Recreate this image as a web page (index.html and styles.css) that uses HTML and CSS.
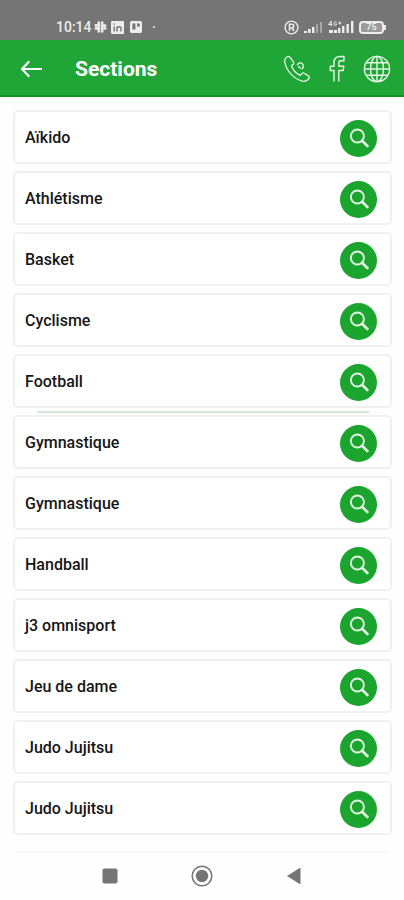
FILE: index.html
```html
<!DOCTYPE html>
<html lang="fr">
<head>
<meta charset="utf-8">
<meta name="viewport" content="width=device-width, initial-scale=1">
<title>Sections</title>
<link rel="stylesheet" href="styles.css">
</head>
<body>
<svg class="defs" aria-hidden="true">
  <symbol id="search" viewBox="0 0 20 20">
    <circle cx="8.4" cy="8" r="6.5" fill="none" stroke="currentColor" stroke-width="1.9"/>
    <path d="M13 12.8 18.4 18" fill="none" stroke="currentColor" stroke-width="2.6" stroke-linecap="round"/>
  </symbol>
</svg>

<div class="status">
  <div class="status-group">
    <span class="time">10:14</span>
    <svg class="slack" width="13" height="12" viewBox="0 0 13 12" fill="none" stroke="currentColor" stroke-width="2.6" stroke-linecap="round"><path d="M4.8 1.6v3.6M8.2 6.8v3.6M1.8 7.4h3.4M7.8 4.6h3.4M8.2 1.6v.6M4.8 9.8v.6M1.8 4.4h.6M10.8 7.4h.4"/></svg>
    <svg class="linkedin" width="13" height="13" viewBox="0 0 13 13"><rect width="13" height="13" rx="1" fill="currentColor"/><path d="M3.2 5.4v5M3.2 2.6v1.2M6 10.4v-5M6 7.6c.4-2.4 4-2.4 4 0v2.8" fill="none" stroke="#757575" stroke-width="1.4"/></svg>
    <svg class="trello" width="12" height="12" viewBox="0 0 12 12"><rect width="12" height="12" rx="1.5" fill="currentColor"/><path d="M2.4 2.6h3v6h-3zM7 2.6h2.8v3H7z" fill="#757575"/></svg>
    <span class="dot"></span>
  </div>
  <div class="status-group icons">
    <svg width="15" height="15" viewBox="0 0 15 15" fill="none" stroke="currentColor"><circle cx="7.5" cy="7.5" r="6.4" stroke-width="1.4"/><path d="M5.5 11V4.2h2.4a1.8 1.8 0 0 1 0 3.7H5.5M8 8l2 3" stroke-width="1.5"/></svg>
    <svg width="19" height="14" viewBox="0 0 19 14" fill="currentColor"><path d="M0 11h3v2H0zM4 9h2.6v4H4zM8 7h2.4v6H8z"/><path d="M12 4h2v9h-2zM16 2h2v11h-2z" opacity=".4"/></svg>
    <svg width="26" height="14" viewBox="0 0 26 14" fill="currentColor"><path d="M1 10h4v3H1zM6 10h3v3H6zM10 8h2.4v5H10zM14 6h2.4v7H14zM18.5 4h2.4v9h-2.4zM23 1h2.4v12H23z"/><path d="M3.3 6V1L.6 4.6h3.6M8.5 1.8C6 .2 5 5.4 7.2 5.4c1.2 0 1.4-.8 1.4-1.6H7.4M10.4 3h3M11.9 1.5v3" fill="none" stroke="currentColor"/></svg>
    <span class="battery">75</span>
  </div>
</div>

<header class="bar">
  <button class="back" type="button" aria-label="Retour">
    <svg width="24" height="20" viewBox="0 0 24 20" fill="none" stroke="currentColor" stroke-width="2.2" stroke-linecap="round" stroke-linejoin="round"><path d="M21 10H2M8.6 3 2 10l6.6 7"/></svg>
  </button>
  <h1>Sections</h1>
  <nav class="links">
    <a href="#" aria-label="Téléphone"><svg width="28" height="28" viewBox="0 0 28 28" fill="none" stroke="currentColor" stroke-width="1.3" stroke-linejoin="round" stroke-linecap="round"><path d="M4.4 1.8c-2.2 1.3-3.2 3.6-2.5 6.3 2 8.2 9.2 15.8 17.3 18 2.8.7 5.3-.3 6.9-2.9.5-.9.2-1.8-.7-2.3l-4.3-2.7c-.8-.5-1.6-.3-2.2.4l-1.5 1.8c-3.9-1.6-7.5-5.3-9-9.6l1.7-1.4c.7-.6.8-1.4.4-2.2L7.3 2.6c-.6-1.1-1.8-1.4-2.9-.8ZM14.4 9.6a3.2 3.2 0 1 1 4.6 4.2M15.4 11.4l2 1.6"/></svg></a>
    <a href="#" aria-label="Facebook"><svg width="28" height="28" viewBox="0 0 28 28" fill="none" stroke="currentColor" stroke-width="1.4" stroke-linejoin="round"><path d="M11 26.6V15.5H7.3v-4.3H11V7.5c0-4 2.2-6 6.2-6H21v4.3h-3c-1.5 0-2.2.8-2.2 2.2v3.2h5l-.6 4.3h-4.4v11.1"/></svg></a>
    <a href="#" aria-label="Site web"><svg width="28" height="28" viewBox="0 0 28 28" fill="none" stroke="currentColor" stroke-width="1.4"><circle cx="14" cy="14" r="12.6"/><ellipse cx="14" cy="14" rx="6.5" ry="12.6"/><path d="M14 1.4v25.2M1.4 14h25.2M3.2 7.8h21.6M3.2 20.2h21.6"/></svg></a>
  </nav>
</header>

<main>
  <ul class="list">
    <li class="card"><span>Aïkido</span><button type="button" aria-label="Voir Aïkido"><svg width="20" height="20"><use href="#search"/></svg></button></li>
    <li class="card"><span>Athlétisme</span><button type="button" aria-label="Voir Athlétisme"><svg width="20" height="20"><use href="#search"/></svg></button></li>
    <li class="card"><span>Basket</span><button type="button" aria-label="Voir Basket"><svg width="20" height="20"><use href="#search"/></svg></button></li>
    <li class="card"><span>Cyclisme</span><button type="button" aria-label="Voir Cyclisme"><svg width="20" height="20"><use href="#search"/></svg></button></li>
    <li class="card ruled"><span>Football</span><button type="button" aria-label="Voir Football"><svg width="20" height="20"><use href="#search"/></svg></button></li>
    <li class="card"><span>Gymnastique</span><button type="button" aria-label="Voir Gymnastique"><svg width="20" height="20"><use href="#search"/></svg></button></li>
    <li class="card"><span>Gymnastique</span><button type="button" aria-label="Voir Gymnastique"><svg width="20" height="20"><use href="#search"/></svg></button></li>
    <li class="card"><span>Handball</span><button type="button" aria-label="Voir Handball"><svg width="20" height="20"><use href="#search"/></svg></button></li>
    <li class="card"><span>j3 omnisport</span><button type="button" aria-label="Voir j3 omnisport"><svg width="20" height="20"><use href="#search"/></svg></button></li>
    <li class="card"><span>Jeu de dame</span><button type="button" aria-label="Voir Jeu de dame"><svg width="20" height="20"><use href="#search"/></svg></button></li>
    <li class="card"><span>Judo Jujitsu</span><button type="button" aria-label="Voir Judo Jujitsu"><svg width="20" height="20"><use href="#search"/></svg></button></li>
    <li class="card"><span>Judo Jujitsu</span><button type="button" aria-label="Voir Judo Jujitsu"><svg width="20" height="20"><use href="#search"/></svg></button></li>
  </ul>
</main>

<footer class="system">
  <button type="button" aria-label="Applications récentes"><svg width="22" height="22" viewBox="0 0 22 22"><rect x="3.5" y="3.5" width="15" height="15" rx="2" fill="currentColor"/></svg></button>
  <button type="button" aria-label="Accueil"><svg width="22" height="22" viewBox="0 0 22 22"><circle cx="11" cy="11" r="9.8" fill="none" stroke="currentColor" stroke-width="1.5"/><circle cx="11" cy="11" r="6.2" fill="currentColor"/></svg></button>
  <button type="button" aria-label="Précédent"><svg width="22" height="22" viewBox="0 0 22 22"><path d="M17.5 2.5v17L4 11z" fill="currentColor"/></svg></button>
</footer>
</body>
</html>
```

FILE: styles.css
```css
* {
  box-sizing: border-box;
}

body {
  margin: 0;
  background: #fefefe;
  color: #161616;
  font-family: Roboto, "Liberation Sans", sans-serif;
}

svg {
  display: block;
  flex: none;
}

button {
  padding: 0;
  border: 0;
  background: none;
  color: inherit;
  cursor: pointer;
}

.defs {
  position: absolute;
  width: 0;
  height: 0;
}

.status {
  display: flex;
  justify-content: space-between;
  padding: 14px 20px 0 56px;
  height: 40px;
  background: #757575;
  color: #ededed;
}

.status-group {
  display: flex;
  align-items: center;
  gap: 4px;
}

.icons {
  gap: 5px;
}

.time {
  font-size: 14px;
  font-weight: 500;
  line-height: 16px;
}

.slack {
  margin-left: -2px;
}

.linkedin,
.trello {
  margin-right: 2px;
}

.dot {
  width: 2px;
  height: 2px;
  margin-left: 5px;
  border-radius: 50%;
  background: currentColor;
}

.battery {
  position: relative;
  width: 25px;
  height: 13px;
  border: 2px solid currentColor;
  border-radius: 4px;
  background: #999;
  font-size: 9px;
  font-weight: 700;
  line-height: 9px;
  text-align: center;
}

.battery::after {
  content: "";
  position: absolute;
  top: 2px;
  right: -4px;
  width: 2px;
  height: 5px;
  background: currentColor;
}

.bar {
  display: flex;
  align-items: center;
  padding: 2px 13px 0 20px;
  height: 57px;
  border-bottom: 2px solid #149322;
  background: #20a637;
  color: #fff;
}

.bar h1 {
  flex: 1;
  margin: 0 0 0 31px;
  font-size: 21px;
  font-weight: 700;
  line-height: 28px;
}

.links {
  display: flex;
  gap: 12px;
}

.links a {
  color: #e4f7e5;
}

.list {
  display: flex;
  flex-direction: column;
  gap: 7px;
  margin: 0;
  padding: 13px 12px 16px 13px;
  list-style: none;
}

.card {
  position: relative;
  display: flex;
  align-items: center;
  justify-content: space-between;
  height: 54px;
  padding: 2px 13px 0 10px;
  border: 2px solid #f0f0f0;
  border-radius: 5px;
  background: #fff;
  font-size: 16px;
  font-weight: 500;
  line-height: 20px;
}

.card button {
  display: grid;
  place-items: center;
  width: 37px;
  height: 37px;
  border-radius: 50%;
  background: #1ba52f;
  color: #e4f7e5;
}

.ruled::after {
  content: "";
  position: absolute;
  right: 21px;
  bottom: -7px;
  left: 22px;
  height: 2px;
  background: #d5e9db;
}

.system {
  display: flex;
  justify-content: center;
  gap: 70px;
  margin: 0 15px;
  padding: 12px 0;
  border-top: 2px solid #f7f7f7;
  color: #757575;
}
```
